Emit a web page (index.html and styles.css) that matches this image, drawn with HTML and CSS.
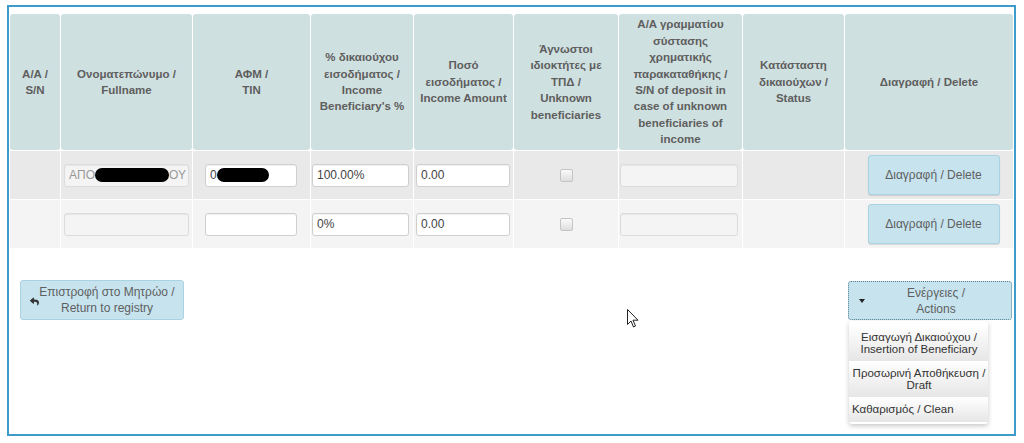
FILE: index.html
```html
<!DOCTYPE html>
<html lang="el">
<head>
  <meta charset="UTF-8" />
  <title>Δικαιούχοι / Beneficiaries</title>
  <link rel="stylesheet" href="styles.css">
</head>
<body>
  <div class="frame">
    <table class="grid">
      <colgroup>
        <col style="width:50px"><col style="width:131px"><col style="width:117px">
        <col style="width:102px"><col style="width:99px"><col style="width:104px">
        <col style="width:123px"><col style="width:101px"><col style="width:168px">
      </colgroup>
      <thead>
        <tr>
          <th>A/A /<br>S/N</th>
          <th>Ονοματεπώνυμο /<br>Fullname</th>
          <th>ΑΦΜ /<br>TIN</th>
          <th>% δικαιούχου<br>εισοδήματος /<br>Income<br>Beneficiary's %</th>
          <th>Ποσό<br>εισοδήματος /<br>Income Amount</th>
          <th>Άγνωστοι<br>ιδιοκτήτες με<br>ΤΠΔ /<br>Unknown<br>beneficiaries</th>
          <th>A/A γραμματίου<br>σύστασης<br>χρηματικής<br>παρακαταθήκης /<br>S/N of deposit in<br>case of unknown<br>beneficiaries of<br>income</th>
          <th>Κατάσταστη<br>δικαιούχων /<br>Status</th>
          <th>Διαγραφή / Delete</th>
        </tr>
      </thead>
      <tbody>
        <tr class="odd">
          <td></td>
          <td><div class="field name disabled"><span>ΑΠΟ</span><span class="redact wide"></span><span>ΟΥ</span></div></td>
          <td><div class="field tin"><span>0</span><span class="redact"></span></div></td>
          <td><div class="field pct">100.00%</div></td>
          <td><div class="field amount">0.00</div></td>
          <td><span class="check"></span></td>
          <td><div class="field deposit disabled"></div></td>
          <td></td>
          <td><button class="btn delete">Διαγραφή / Delete</button></td>
        </tr>
        <tr class="even">
          <td></td>
          <td><div class="field name disabled"></div></td>
          <td><div class="field tin"></div></td>
          <td><div class="field pct">0%</div></td>
          <td><div class="field amount">0.00</div></td>
          <td><span class="check"></span></td>
          <td><div class="field deposit disabled"></div></td>
          <td></td>
          <td><button class="btn delete">Διαγραφή / Delete</button></td>
        </tr>
      </tbody>
    </table>

    <div class="toolbar">
      <button class="btn back">
        <svg class="reply" viewBox="0 0 512 512"><path d="M8.3 189.8L184.3 37.9C199.7 24.5 224 35.3 224 56v80.1c160.6 1.8 288 34 288 186.2 0 61.4-39.6 122.3-83.3 154.1-13.7 9.9-33.1-2.5-28.1-18.6 45.3-145-21.5-183.5-176.6-185.7V360c0 20.7-24.3 31.5-39.7 18.2l-176-152c-11.1-9.6-11.1-26.8 0-36.4z"/></svg>
        <span class="label">Επιστροφή στο Μητρώο /<br>Return to registry</span>
      </button>

      <div class="actions">
        <button class="btn actions-btn">
          <span class="caret"></span>
          <span class="label">Ενέργειες /<br>Actions</span>
        </button>
        <ul class="menu">
          <li class="center">Εισαγωγή Δικαιούχου /<br>Insertion of Beneficiary</li>
          <li class="center">Προσωρινή Αποθήκευση /<br>Draft</li>
          <li>Καθαρισμός / Clean</li>
        </ul>
      </div>
    </div>

    <svg class="cursor" width="12" height="19" viewBox="0 0 12 19">
      <path d="M0.5 0.5 L0.5 15.5 L4 12 L6.5 18 L8.5 17 L6 11.2 L11 11.2 Z" fill="#fff" stroke="#222" stroke-width="1"/>
    </svg>
  </div>
</body>
</html>
```

FILE: styles.css
```css
body {
  margin: 0;
  background: #fff;
  font-family: "Liberation Sans", Arial, sans-serif;
  color: #555;
}

.frame {
  position: relative;
  box-sizing: border-box;
  width: 1009px;
  height: 431px;
  margin: 5px 0 0 7px;
  padding-top: 6px;
  border: 2px solid #3d9cc9;
  background: #fff;
}

.grid {
  table-layout: fixed;
  width: 1005px;
  border-collapse: separate;
  border-spacing: 1px;
}

.grid th {
  height: 136px;
  padding: 0 4px;
  background: #cfe0e0;
  border-radius: 3px;
  font-size: 11.5px;
  font-weight: bold;
  line-height: 16.4px;
  color: #5e5e5e;
  text-align: center;
  vertical-align: middle;
}

.grid td {
  height: 48px;
  padding: 0;
  text-align: center;
  vertical-align: middle;
}

.odd td { background: #e9e9e9; }
.even td { background: #f4f4f4; }

.field {
  box-sizing: border-box;
  display: flex;
  align-items: center;
  height: 23px;
  margin: 0 auto;
  padding: 0 4px;
  overflow: hidden;
  white-space: nowrap;
  background: #fff;
  border: 1px solid #cfcfcf;
  border-radius: 3px;
  box-shadow: inset 0 1px 1px rgba(0,0,0,0.06);
  font-size: 12px;
  color: #444;
  text-align: left;
}

.field.disabled {
  background: #f4f4f4;
  border-color: #dcdcdc;
  color: #999;
}

.name { width: 125px; margin-left: 3px; }
.tin { width: 92px; margin-left: 12px; }
.pct { width: 97px; margin-left: 1px; }
.amount { width: 94px; margin-left: 2px; }
.deposit { width: 118px; margin-left: 1px; }

.redact {
  flex: none;
  display: inline-block;
  width: 52px;
  height: 14px;
  border-radius: 7px;
  background: #000;
}

.redact.wide { width: 74px; }

.check {
  display: inline-block;
  width: 11px;
  height: 11px;
  margin-left: 1px;
  border: 1px solid #c4c4c4;
  border-radius: 2px;
  background: linear-gradient(#fafafa, #dedede);
  vertical-align: middle;
}

.btn {
  box-sizing: border-box;
  background: #c6e3ee;
  border: 1px solid #a9d2e2;
  border-radius: 3px;
  font-family: "Liberation Sans", Arial, sans-serif;
  font-size: 12px;
  line-height: 16px;
  color: #5f5f5f;
  cursor: pointer;
}

.delete {
  width: 132px;
  height: 40px;
  margin-left: 9px;
  box-shadow: 0 1px 1px rgba(0,0,0,0.12);
}

.toolbar {
  display: flex;
  justify-content: space-between;
  align-items: flex-start;
  padding: 31px 2px 0 11px;
}

.back {
  display: flex;
  align-items: center;
  width: 164px;
  height: 40px;
  padding: 0 8px 0 9px;
}

.reply {
  width: 9px;
  height: 9px;
  margin-top: 2px;
  fill: #333;
}

.label {
  flex: 1;
  text-align: center;
}

.actions {
  position: relative;
  margin-top: 1px;
}

.actions-btn {
  display: flex;
  align-items: center;
  width: 164px;
  height: 39px;
  padding: 0 10px 0 10px;
  border: 1px dotted #4f7f90;
}

.actions-btn .label { padding-left: 6px; }

.caret {
  width: 0;
  height: 0;
  border-top: 4px solid #222;
  border-left: 3px solid transparent;
  border-right: 3px solid transparent;
}

.menu {
  position: absolute;
  top: calc(100% + 1px);
  left: 1px;
  width: 139px;
  margin: 0;
  padding: 4px 0 2px;
  list-style: none;
  background: #fff;
  border-radius: 3px;
  box-shadow: 0 2px 5px rgba(0,0,0,0.22);
  font-size: 11.5px;
  line-height: 11.5px;
  color: #333;
}

.menu li {
  padding: 7px 2px 6px 3px;
  background: linear-gradient(#fff, #e6e6e6);
}

.menu li.center { text-align: center; }

.cursor {
  position: absolute;
  left: 618px;
  top: 302px;
}
```
